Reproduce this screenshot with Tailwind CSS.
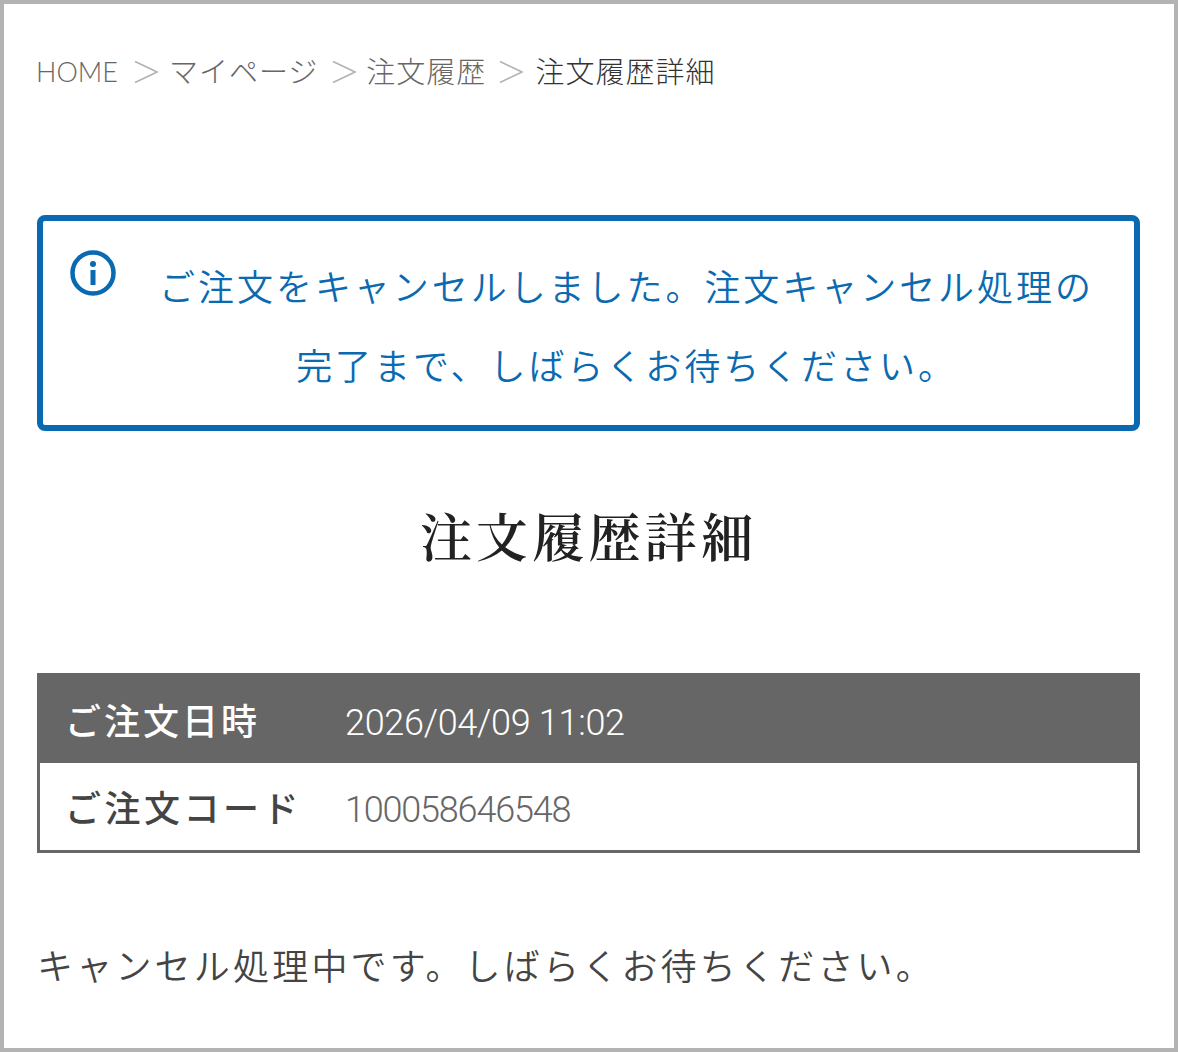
<!DOCTYPE html>
<html lang="ja"><head><meta charset="utf-8"><script src="https://cdn.jsdelivr.net/npm/@tailwindcss/browser@4"></script></head>
<body class="bg-white">
<div class="w-[1178px] h-[1052px] overflow-hidden border-4 border-[#b3b3b3] bg-white pl-[33px] pr-[34px] font-['Roboto','Noto_Sans_CJK_JP',sans-serif] font-[350]">
  <nav class="flex items-center h-[40px] mt-[48px] text-[29px] tracking-[1px] text-[#666] font-light">
    <span class="relative left-[-1px] text-[27px] tracking-normal font-['Lato',sans-serif]">HOME</span>
    <svg class="ml-[15px] mr-[11px]" width="24" height="24" viewBox="0 0 24 24" fill="none" stroke="#b3b3b3" stroke-width="1.6"><path d="M1 1.5 L23 12 L1 22.5"/></svg>
    <span class="relative top-[2px]">マイページ</span>
    <svg class="ml-[14px] mr-[10px]" width="24" height="24" viewBox="0 0 24 24" fill="none" stroke="#b3b3b3" stroke-width="1.6"><path d="M1 1.5 L23 12 L1 22.5"/></svg>
    <span class="relative top-[2px]">注文履歴</span>
    <svg class="ml-[13px] mr-[12px]" width="24" height="24" viewBox="0 0 24 24" fill="none" stroke="#b3b3b3" stroke-width="1.6"><path d="M1 1.5 L23 12 L1 22.5"/></svg>
    <span class="relative top-[2px] text-[#333]">注文履歴詳細</span>
  </nav>
  <div class="relative mt-[123px] h-[216px] border-[6px] border-[#0a6ab1] rounded-[8px] pl-[116px] pr-[40px] pt-[29px] text-center text-[36px] leading-[79px] tracking-[2.95px] text-[#0a6ab1]">
    <svg class="absolute left-[27px] top-[29px]" width="46" height="46" viewBox="0 0 46 46" fill="none"><circle cx="23" cy="23" r="20.5" stroke="#0a6ab1" stroke-width="4.5"/><circle cx="23" cy="14" r="3" fill="#0a6ab1"/><rect x="20.5" y="20" width="5" height="15" fill="#0a6ab1"/></svg>
    <p>ご注文をキャンセルしました。注文キャンセル処理の完了まで、しばらくお待ちください。</p>
  </div>
  <h1 class="mt-[73px] h-[72px] text-center text-[52px] leading-[72px] tracking-[4.2px] font-semibold text-[#222] font-['Liberation_Serif','Noto_Serif_CJK_JP','Noto_Sans_CJK_JP',serif]">注文履歴詳細</h1>
  <div class="mt-[97px] border-[3px] border-[#666]">
    <div class="flex items-center h-[87px] bg-[#666] text-white">
      <span class="relative top-[3px] w-[305px] pl-[25px] text-[36px] tracking-[3px] font-medium">ご注文日時</span>
      <span class="relative top-[3px] text-[36px] tracking-[-0.3px]">2026/04/09 11:02</span>
    </div>
    <div class="flex items-center h-[87px] text-[#666]">
      <span class="relative top-[3px] w-[305px] pl-[25px] text-[36px] tracking-[3.5px] font-medium text-[#444]">ご注文コード</span>
      <span class="relative top-[3px] text-[36px] tracking-[-1.2px]">100058646548</span>
    </div>
  </div>
  <p class="mt-[87px] text-[36px] leading-[56px] tracking-[3.2px] text-[#444]">キャンセル処理中です。しばらくお待ちください。</p>
</div>
</body></html>
